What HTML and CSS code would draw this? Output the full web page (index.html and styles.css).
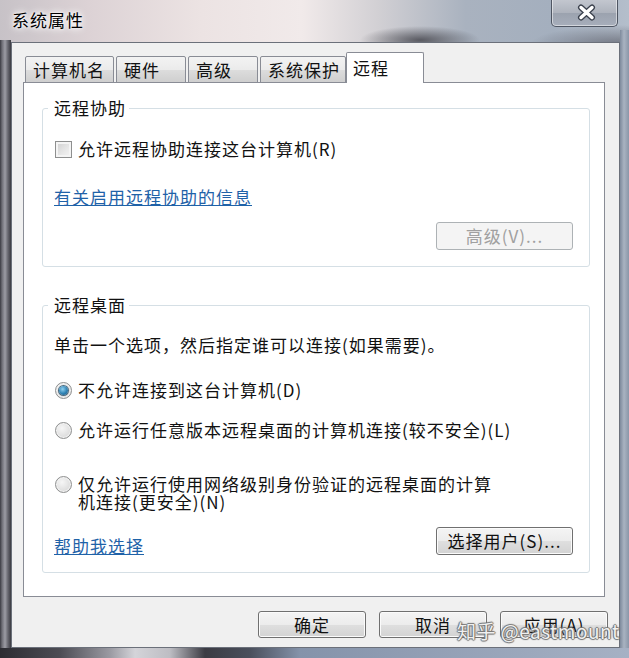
FILE: index.html
```html
<!DOCTYPE html>
<html lang="zh-CN">
<head>
<meta charset="utf-8">
<title>系统属性</title>
<link rel="stylesheet" href="styles.css">
</head>
<body>
<div class="window">
  <div class="titlebar">
    <span class="title">系统属性</span>
    <div class="close">
      <svg width="19" height="17" viewBox="0 0 19 17">
        <path d="M4 3.5 L15 13.5 M15 3.5 L4 13.5" stroke="#3b414d" stroke-width="6" stroke-linecap="round"/>
        <path d="M4 3.5 L15 13.5 M15 3.5 L4 13.5" stroke="#ffffff" stroke-width="3.4" stroke-linecap="round"/>
      </svg>
    </div>
  </div>
  <div class="client">
    <div class="tabs">
      <div class="tab t1">计算机名</div>
      <div class="tab t2">硬件</div>
      <div class="tab t3">高级</div>
      <div class="tab t4">系统保护</div>
      <div class="tab active">远程</div>
    </div>
    <div class="panel">
      <fieldset class="group g1">
        <legend>远程协助</legend>
        <div class="row check-row">
          <span class="checkbox"></span>
          <span class="label">允许远程协助连接这台计算机(R)</span>
        </div>
        <a class="link info-link">有关启用远程协助的信息</a>
        <div class="btn-row">
          <span class="btn disabled adv">高级(V)...</span>
        </div>
      </fieldset>
      <fieldset class="group g2">
        <legend>远程桌面</legend>
        <div class="desc">单击一个选项，然后指定谁可以连接(如果需要)。</div>
        <div class="row radio-row r1">
          <span class="radio checked"></span>
          <span class="label">不允许连接到这台计算机(D)</span>
        </div>
        <div class="row radio-row r2">
          <span class="radio"></span>
          <span class="label">允许运行任意版本远程桌面的计算机连接(较不安全)(L)</span>
        </div>
        <div class="row radio-row r3">
          <span class="radio"></span>
          <span class="label two">仅允许运行使用网络级别身份验证的远程桌面的计算<br>机连接(更安全)(N)</span>
        </div>
        <div class="bottom-row">
          <a class="link help-link">帮助我选择</a>
          <span class="btn users">选择用户(S)...</span>
        </div>
      </fieldset>
    </div>
    <div class="actions">
      <span class="btn action">确定</span>
      <span class="btn action">取消</span>
      <span class="btn action">应用(A)</span>
    </div>
  </div>
  <div class="watermark">知乎 @eastmount</div>
</div>
</body>
</html>
```

FILE: styles.css
```css
html, body {
  margin: 0;
  padding: 0;
  overflow: hidden;
}

body {
  font-family: "Noto Sans CJK SC", "Microsoft YaHei", sans-serif;
  font-size: 17px;
  letter-spacing: 1px;
  line-height: 18px;
  color: #111;
}

.window {
  position: relative;
  width: 629px;
  height: 658px;
  box-sizing: border-box;
  padding: 0 9px 10px 11px;
  display: flex;
  flex-direction: column;
  background:
    linear-gradient(90deg, #2c2c32 0, #4c4c54 60px, #9a9aa2 110px, #d4d4d9 135px, #bdbdc3 170px, #3b3b43 205px, #4a4f5c 250px, #8593aa 300px, #a6b1c4 100%) left bottom / 100% 10px no-repeat,
    linear-gradient(90deg, #3a3a41 0, #6d6d75 2px, #9c9ca4 5px, #66666e 8px, #3a3a41 11px) left 40px / 11px calc(100% - 40px) no-repeat,
    linear-gradient(90deg, #7e8a9c 0, #a9b3c1 4px, #8a96a8 9px) right 30px / 9px calc(100% - 30px) no-repeat,
    radial-gradient(ellipse 60px 14px at 420px 40px, rgba(55, 55, 62, 0.75), rgba(55, 55, 62, 0)),
    radial-gradient(ellipse 90px 20px at 620px 45px, rgba(70, 70, 80, 0.6), rgba(70, 70, 80, 0)),
    linear-gradient(90deg, #c7c2c7 0%, #dcd2d5 14%, #ece3e3 32%, #f1eaea 48%, #d2d0d4 60%, #a9b2bf 74%, #a4afbe 88%, #b4becb 100%);
}

.titlebar {
  height: 42px;
  flex: none;
  display: flex;
  justify-content: space-between;
  align-items: flex-start;
}

.title {
  margin-top: 11px;
  margin-left: 1px;
  color: #000;
  text-shadow: 0 0 6px #fff, 0 0 10px #fff, 0 0 3px #fff;
}

.close {
  width: 67px;
  height: 28px;
  box-sizing: border-box;
  margin-right: 2px;
  margin-top: -1px;
  border: 1px solid #4f5663;
  border-top: none;
  border-radius: 0 0 5px 5px;
  background: linear-gradient(#c4c8d0, #aeb3bd 50%, #9ba2ae 51%, #a7aebb);
  box-shadow: inset 0 0 0 1px rgba(255, 255, 255, 0.5);
  display: flex;
  align-items: center;
  justify-content: center;
  padding-left: 4px;
}

.client {
  flex: 1;
  display: flex;
  flex-direction: column;
  background: #f0f0f0;
  border: 1px solid #6b707a;
  padding: 9px 14px 9px 11px;
}

.tabs {
  display: flex;
  align-items: flex-end;
  height: 31px;
  margin-bottom: -1px;
  padding-left: 2px;
  position: relative;
  z-index: 1;
}

.tab {
  box-sizing: border-box;
  height: 27px;
  padding-left: 7px;
  border: 1px solid #898c95;
  border-radius: 2px 2px 0 0;
  background: linear-gradient(#f3f3f3, #ebebeb 50%, #dddddd 51%, #cfcfcf);
  line-height: 25px;
  white-space: nowrap;
  margin-right: 2px;
}

.t1 { width: 89px; }
.t2 { width: 70px; }
.t3 { width: 70px; }
.t4 { width: 86px; margin-right: 0; }

.tab.active {
  width: 78px;
  height: 31px;
  padding-left: 6px;
  background: #fff;
  border-bottom: none;
  line-height: 29px;
  margin-right: 0;
}

.panel {
  flex: 1;
  background: #fff;
  border: 1px solid #898c95;
  padding: 16px 14px 0 18px;
}

.group {
  margin: 0;
  min-width: 0;
  border: 1px solid #d5dfe5;
  border-radius: 3px;
  padding: 0 16px 16px 11px;
  display: flex;
  flex-direction: column;
}

.group legend {
  padding: 0 3px 0 6px;
  margin-left: -6px;
  line-height: 18px;
}

.g2 {
  margin-top: 29px;
  padding-bottom: 17px;
}

.row {
  display: flex;
  align-items: center;
}

.check-row {
  margin-top: 23px;
}

.checkbox {
  width: 17px;
  height: 17px;
  box-sizing: border-box;
  margin-left: 1px;
  margin-right: 6px;
  border: 1px solid #8e8f8f;
  background: linear-gradient(135deg, #cfcfcf, #e8e8e8 60%, #f4f4f4);
  box-shadow: inset 0 0 0 2px #f4f4f4;
  flex: none;
}

.link {
  color: #1f62a8;
  text-decoration: underline;
}

.info-link {
  margin-top: 30px;
  align-self: flex-start;
}

.btn-row {
  margin-top: 16px;
  display: flex;
  justify-content: flex-end;
}

.btn {
  box-sizing: border-box;
  height: 28px;
  display: flex;
  align-items: center;
  justify-content: center;
  white-space: nowrap;
  border: 1px solid #707070;
  border-radius: 3px;
  background: linear-gradient(#f4f4f4, #ececec 50%, #dfdfdf 51%, #d3d3d3);
  box-shadow: inset 0 0 0 1px #fbfbfb;
  color: #111;
}

.btn.disabled {
  border-color: #adb2b5;
  background: #f4f4f4;
  box-shadow: none;
  color: #a0a0a0;
}

.adv, .users {
  width: 137px;
  padding: 0 2px;
}

.desc {
  margin-top: 22px;
}

.r1 { margin-top: 27px; }
.r2 { margin-top: 22px; }
.r3 {
  margin-top: 36px;
  align-items: flex-start;
}

.radio {
  width: 17px;
  height: 17px;
  box-sizing: border-box;
  margin-left: 1px;
  margin-right: 6px;
  margin-top: 0;
  border-radius: 50%;
  border: 1px solid #8e8f8f;
  background: radial-gradient(circle at 40% 35%, #f6f6f6, #dcdcdc 70%, #cbcbcb);
  box-shadow: inset 0 0 0 1px #f2f2f2;
  flex: none;
  display: flex;
  align-items: center;
  justify-content: center;
}

.r3 .radio {
  margin-top: 1px;
}

.radio.checked::after {
  content: "";
  width: 9px;
  height: 9px;
  border-radius: 50%;
  background: radial-gradient(circle at 40% 35%, #8fd0ef, #2f82b4 55%, #174f78);
  box-shadow: 0 0 0 1px #4a6b80;
}

.label.two {
  line-height: 18px;
}

.bottom-row {
  margin-top: 16px;
  display: flex;
  justify-content: space-between;
  align-items: flex-end;
}

.help-link {
  line-height: 18px;
}

.actions {
  flex: none;
  margin-top: 14px;
  margin-right: -3px;
  display: flex;
  justify-content: flex-end;
  gap: 13px;
}

.action {
  width: 108px;
  height: 27px;
}

.watermark {
  position: absolute;
  left: 457px;
  top: 620px;
  font-size: 19px;
  line-height: 22px;
  letter-spacing: 0.5px;
  color: rgba(255, 255, 255, 0.92);
  text-shadow: 0 0 1px #666, 1px 0 1px #777, -1px 0 1px #777, 0 1px 1px #777, 0 -1px 1px #777;
  white-space: nowrap;
}
```
